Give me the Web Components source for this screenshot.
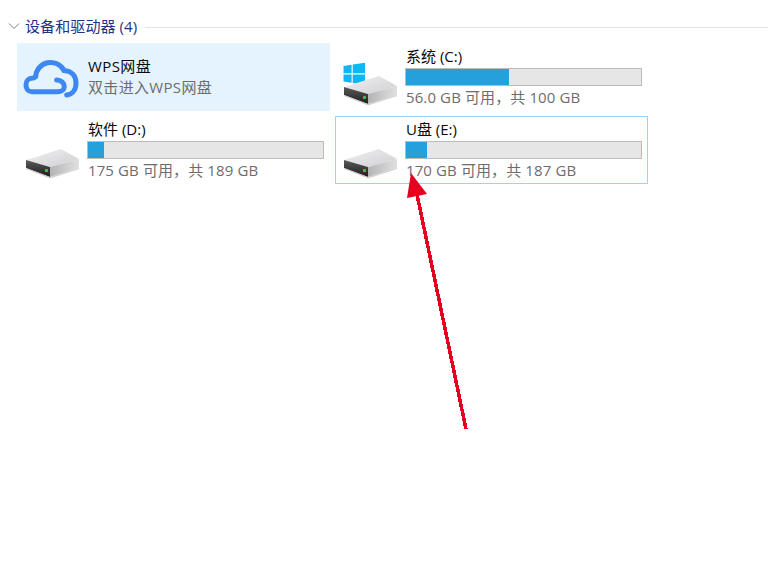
<!DOCTYPE html>
<html lang="zh-CN">
<head>
<meta charset="UTF-8">
<title>此电脑</title>
<style>
  html, body { margin: 0; background: #fff; }
  body {
    width: 768px;
    height: 568px;
    overflow: hidden;
    position: relative;
    font-family: "Open Sans", "Noto Sans CJK SC", sans-serif;
  }
</style>
</head>
<body>
<drive-section heading="设备和驱动器 (4)">
  <drive-tile name="WPS网盘" sub="双击进入WPS网盘" kind="cloud" state="selected"></drive-tile>
  <drive-tile name="系统 (C:)" sub="56.0 GB 可用，共 100 GB" used="44" kind="windows"></drive-tile>
  <drive-tile name="软件 (D:)" sub="175 GB 可用，共 189 GB" used="7" kind="disk"></drive-tile>
  <drive-tile name="U盘 (E:)" sub="170 GB 可用，共 187 GB" used="9" kind="disk" state="focus"></drive-tile>
</drive-section>
<red-arrow></red-arrow>

<script>
class DriveSection extends HTMLElement {
  constructor() {
    super();
    this.attachShadow({ mode: "open" });
    this.shadowRoot.innerHTML = `
      <style>
        :host { display: block; padding-top: 17px; }
        .head { display: flex; align-items: center; height: 20px; padding-left: 8px; color: #1e3287; font-size: 15px; letter-spacing: .1px; }
        svg { width: 12px; height: 12px; margin: -2px 5px 0 0; }
        span { line-height: 20px; margin-top: -2px; }
        .line { flex: 1; height: 1px; background: #e5e5e5; margin-left: 8px; }
        .tiles { display: grid; grid-template-columns: 313px 313px; gap: 5px; padding: 6px 0 0 17px; }
      </style>
      <div class="head">
        <svg viewBox="0 0 12 12" fill="none" stroke="#7a7a7a" stroke-width="1"><path d="M1 3.5 6 8.5 11 3.5"/></svg>
        <span id="t"></span><div class="line"></div>
      </div>
      <div class="tiles"><slot></slot></div>`;
  }
  connectedCallback() {
    this.shadowRoot.getElementById("t").textContent = this.getAttribute("heading");
  }
}

const icons = {
  cloud: `<svg class="cloud" width="60" height="50" viewBox="0 0 60 50" fill="none" stroke="#3f87f0" stroke-width="5" stroke-linecap="round">
    <path d="M36.7 28C41 28 44.3 31 44.3 34.7 44.3 37.7 41.5 39.7 37.7 39.7H11.7C8 39.7 6 36.8 6 33 6 29 8.5 26.3 11.7 26.3 13 26.3 14.5 25.8 15.7 24.7A15 15 0 0 1 44 18.5C51.5 19 56 24 56 31 56 38 52 42.5 46.7 43"/></svg>`,
  disk: `<svg class="disk" width="70" height="60" viewBox="0 0 70 60"></svg>`
};

function diskShape(withLogo) {
  const logo = withLogo ? `
    <g fill="#0db7f2">
      <path d="M9.5 18 17.6 16.8V25.3H9.5Z"/><path d="M18.7 16.6 31 14.7V25.3H18.7Z"/>
      <path d="M9.5 26.4H17.6V34.8L9.5 33.6Z"/><path d="M18.7 26.4H31V37L18.7 35Z"/>
    </g>` : "";
  return `
    <defs>
      <linearGradient id="top" x1="0" y1="0" x2="1" y2="1"><stop offset="0" stop-color="#f0f0f2"/><stop offset="1" stop-color="#cfd0d3"/></linearGradient>
      <linearGradient id="side" x1="0" y1="0" x2="1" y2="0"><stop offset="0" stop-color="#b4b4b4"/><stop offset="1" stop-color="#e0e0e0"/></linearGradient>
      <linearGradient id="front" x1="0" y1="0" x2="0" y2="1"><stop offset="0" stop-color="#5a5a5a"/><stop offset="1" stop-color="#1e1e1e"/></linearGradient>
    </defs>
    ${logo}
    <path d="M10 39 45 28 63 38 34 46Z" fill="url(#top)"/>
    <path d="M34 46 63 38V47L34 56Z" fill="url(#side)"/>
    <path d="M10 39 34 46V56L10 47Z" fill="url(#front)"/>
    <path d="M10 47 34 56 63 47V48L34 57.5 10 48Z" fill="#cfcfcf"/>
    <rect x="29" y="48" width="3" height="3" fill="#22c44d"/>`;
}

class DriveTile extends HTMLElement {
  constructor() {
    super();
    this.attachShadow({ mode: "open" });
    this.shadowRoot.innerHTML = `
      <style>
        :host { display: block; box-sizing: border-box; height: 68px; border: 1px solid transparent; }
        :host([state="selected"]) { background: #e5f3ff; border-color: #e5f3ff; letter-spacing: .4px; }
        :host([state="focus"]) { border-color: #99d1ff; }
        .row { display: flex; height: 100%; }
        .icon { width: 69px; flex: none; position: relative; overflow: hidden; }
        .icon svg { display: block; }
        .icon svg.cloud { margin: 8px 0 0 2px; }
        .icon svg.disk { margin: 4px 0 0 -2px; }
        .text { width: 237px; padding-top: 3px; }
        .name { height: 21px; line-height: 19px; font-size: 15px; color: #0a0a0a; padding-left: 1px; }
        .sub { height: 20px; line-height: 20px; margin-top: 1px; font-size: 15px; color: #6d6d6d; padding-left: 1px; letter-spacing: .11px; }
        .bar { box-sizing: border-box; height: 18px; background: #e6e6e6; border: 1px solid #bcbcbc; }
        .fill { height: 100%; background: #26a0da; }
        :host([state="selected"]) .text { padding-top: 12px; }
        :host([state="selected"]) .name { line-height: 21px; }
        :host([state="selected"]) .sub { margin-top: 0; letter-spacing: .33px; }
      </style>
      <div class="row">
        <div class="icon"></div>
        <div class="text">
          <div class="name"></div>
          <div class="bar"><div class="fill"></div></div>
          <div class="sub"></div>
        </div>
      </div>`;
  }
  connectedCallback() {
    const root = this.shadowRoot;
    const kind = this.getAttribute("kind");
    root.querySelector(".name").textContent = this.getAttribute("name");
    root.querySelector(".sub").textContent = this.getAttribute("sub");
    const icon = root.querySelector(".icon");
    icon.innerHTML = kind === "cloud" ? icons.cloud : icons.disk;
    if (kind !== "cloud") icon.firstElementChild.innerHTML = diskShape(kind === "windows");
    const used = this.getAttribute("used");
    if (used === null) root.querySelector(".bar").remove();
    else root.querySelector(".fill").style.width = used + "%";
  }
}

class RedArrow extends HTMLElement {
  constructor() {
    super();
    this.attachShadow({ mode: "open" });
    this.shadowRoot.innerHTML = `
      <style>:host { position: absolute; left: 0; top: 0; width: 768px; height: 568px; pointer-events: none; }</style>
      <svg width="768" height="568" viewBox="0 0 768 568">
        <path d="M416.5 192 466 429" stroke="#e60020" stroke-width="3.5" fill="none" shape-rendering="crispEdges"/>
        <path d="M411 173 427 194 407 198Z" fill="#e60020"/>
      </svg>`;
  }
}

customElements.define("drive-section", DriveSection);
customElements.define("drive-tile", DriveTile);
customElements.define("red-arrow", RedArrow);
</script>
</body>
</html>
